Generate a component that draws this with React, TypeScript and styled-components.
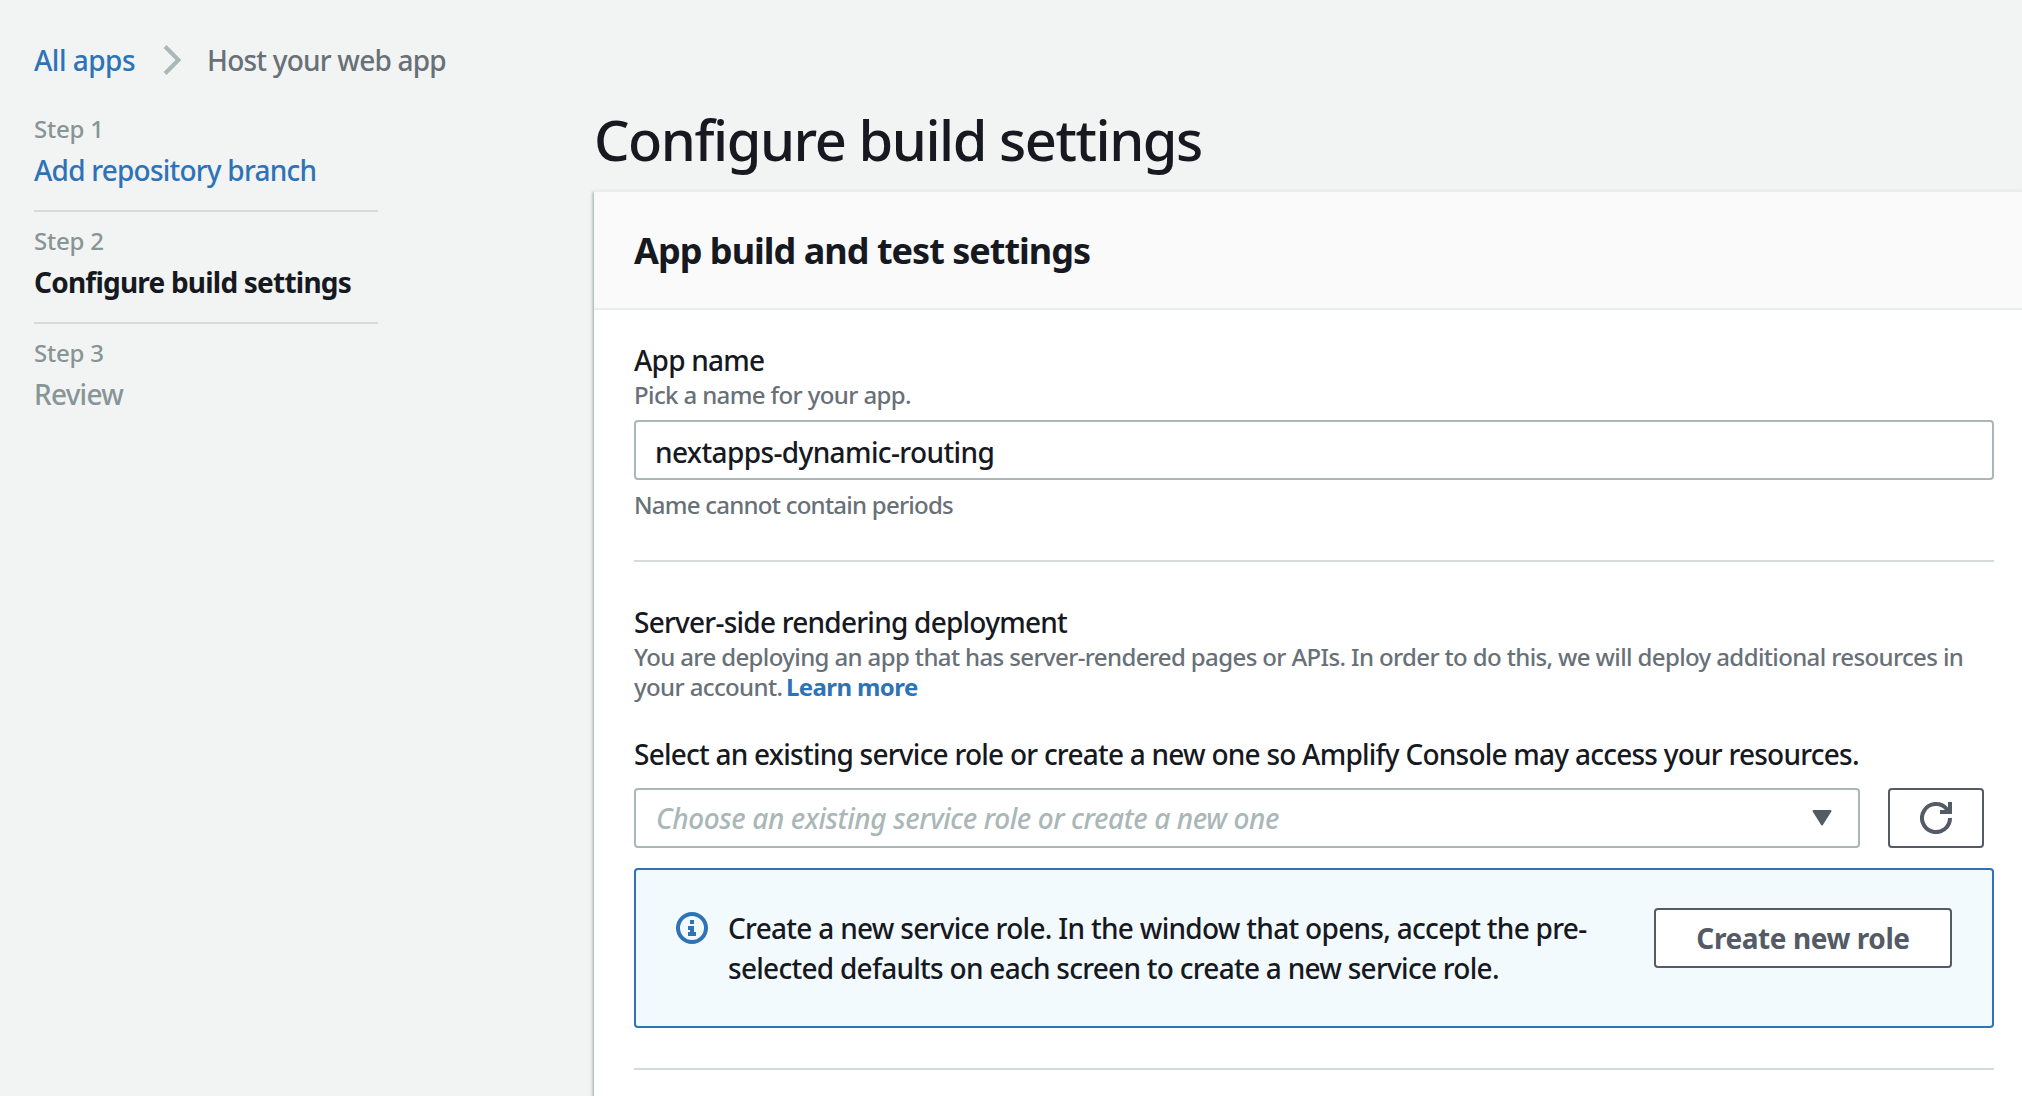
import React from "react";
import styled, { createGlobalStyle } from "styled-components";

const Global = createGlobalStyle`
  *, *::before, *::after { box-sizing: border-box; }
  body {
    margin: 0;
    background: #f2f4f3;
    color: #16191f;
    font-family: "Noto Sans", "Open Sans", sans-serif;
    font-weight: 500;
  }
`;

const Page = styled.div`
  height: 1096px;
  overflow: hidden;
  padding: 42px 0 0 34px;
  white-space: nowrap;
`;

const Breadcrumb = styled.nav`
  display: flex;
  align-items: center;
  height: 36px;
  font-size: 28px;
  line-height: 36px;
`;

const Crumb = styled.a<{ $current?: boolean }>`
  color: ${(p) => (p.$current ? "#687078" : "#2e73b8")};
  letter-spacing: ${(p) => (p.$current ? "-0.8px" : "-0.5px")};
`;

const Chevron = styled.svg`
  display: block;
  width: 20px;
  height: 32px;
  margin: 0 24px 0 28px;
`;

const Columns = styled.div`
  display: flex;
  gap: 216px;
`;

const Steps = styled.ol`
  list-style: none;
  width: 344px;
  margin: 0;
  padding: 22px 0 0;
`;

const Step = styled.li`
  height: 112px;
  padding: 11px 0 0;
  border-bottom: 2px solid #d5dbdb;

  &:last-child { border-bottom: 0; }
`;

const StepLabel = styled.div`
  font-size: 24px;
  line-height: 36px;
  letter-spacing: -0.2px;
  color: #879596;
`;

type StepState = "done" | "current" | "todo";
const stepColor = { done: "#2e73b8", current: "#16191f", todo: "#879596" };

const StepName = styled.div<{ $state: StepState }>`
  margin-top: 3px;
  font-size: 28px;
  line-height: 40px;
  letter-spacing: -0.78px;
  color: ${(p) => stepColor[p.$state]};
  font-weight: ${(p) => (p.$state === "current" ? 700 : 500)};
`;

const Main = styled.main`
  flex: 1;
  padding-top: 26px;
`;

const PageTitle = styled.h1`
  margin: 0 0 16px;
  font-size: 56px;
  font-weight: 500;
  line-height: 70px;
  letter-spacing: -1.46px;
`;

const Card = styled.section`
  height: 960px;
  background: #fff;
  border-top: 2px solid #eaeded;
  box-shadow: -1px 2px 3px 0 rgba(0, 28, 36, 0.38);
`;

const CardHeader = styled.header`
  padding: 37px 40px 35px;
  background: #fafafa;
  border-bottom: 2px solid #eaeded;
`;

const CardTitle = styled.h2`
  margin: 0;
  font-size: 36px;
  font-weight: 700;
  line-height: 44px;
  letter-spacing: -0.98px;
`;

const CardBody = styled.div`
  padding: 32px 28px 0 40px;
`;

const Label = styled.div`
  font-size: 28px;
  line-height: 36px;
  letter-spacing: -0.762px;
`;

const Hint = styled.div<{ $top: number; $spacing: number }>`
  margin-top: ${(p) => p.$top}px;
  font-size: 24px;
  line-height: 30px;
  letter-spacing: ${(p) => p.$spacing}px;
  color: #687078;
`;

const LearnMore = styled.a`
  margin-left: -2px;
  color: #2e73b8;
  font-weight: 700;
  letter-spacing: -0.61px;
`;

const TextInput = styled.input`
  display: block;
  width: 100%;
  height: 60px;
  margin-top: 10px;
  padding: 3px 19px 0;
  border: 2px solid #aab7b8;
  border-radius: 4px;
  background: #fff;
  color: #16191f;
  font: inherit;
  font-size: 28px;
  letter-spacing: -0.62px;
  outline: none;
`;

const Divider = styled.hr<{ $bottom: number }>`
  height: 2px;
  margin: 40px 0 ${(p) => p.$bottom}px;
  border: 0;
  background: #d5dbdb;
`;

const RoleLabel = styled(Label)`
  margin: 34px 0 16px;
`;

const RoleRow = styled.div`
  display: flex;
  gap: 28px;
  padding-right: 10px;
`;

const Select = styled.div`
  flex: 1;
  display: flex;
  align-items: center;
  justify-content: space-between;
  height: 60px;
  padding: 0 26px 0 20px;
  border: 2px solid #aab7b8;
  border-radius: 4px;
`;

const Placeholder = styled.span`
  font-size: 28px;
  font-style: italic;
  line-height: 38px;
  letter-spacing: -0.407px;
  color: #aab7b8;
`;

const Caret = styled.svg`
  display: block;
  width: 20px;
  height: 16px;
`;

const Button = styled.button`
  display: flex;
  align-items: center;
  justify-content: center;
  height: 60px;
  padding: 0;
  border: 2px solid #545b64;
  border-radius: 4px;
  background: #fff;
  color: #545b64;
  font: inherit;
  font-size: 28px;
  font-weight: 700;
  letter-spacing: -0.427px;
`;

const RefreshButton = styled(Button)`
  width: 96px;
`;

const CreateButton = styled(Button)`
  width: 298px;
`;

const Icon = styled.svg`
  display: block;
  width: 32px;
  height: 32px;
`;

const Alert = styled.div`
  display: flex;
  align-items: flex-start;
  height: 160px;
  margin-top: 20px;
  padding: 38px 40px;
  border: 2px solid #2e73b8;
  border-radius: 4px;
  background: #f2fafd;
`;

const InfoIcon = styled(Icon)`
  margin: 4px 20px 0 0;
`;

const AlertText = styled.div`
  flex: 1;
  font-size: 28px;
  line-height: 40px;
`;

const AlertLine = styled.div<{ $spacing: number }>`
  letter-spacing: ${(p) => p.$spacing}px;
`;

const steps: { name: string; state: StepState }[] = [
  { name: "Add repository branch", state: "done" },
  { name: "Configure build settings", state: "current" },
  { name: "Review", state: "todo" },
];

export default function App() {
  return (
    <Page>
      <Global />
      <Breadcrumb>
        <Crumb>All apps</Crumb>
        <Chevron viewBox="0 0 20 32" fill="none" stroke="#aab7b8" strokeWidth="4">
          <path d="M2 2.5 15.5 16 2 29.5" />
        </Chevron>
        <Crumb $current>Host your web app</Crumb>
      </Breadcrumb>
      <Columns>
        <Steps>
          {steps.map((s, i) => (
            <Step key={s.name}>
              <StepLabel>Step {i + 1}</StepLabel>
              <StepName $state={s.state}>{s.name}</StepName>
            </Step>
          ))}
        </Steps>
        <Main>
          <PageTitle>Configure build settings</PageTitle>
          <Card>
            <CardHeader>
              <CardTitle>App build and test settings</CardTitle>
            </CardHeader>
            <CardBody>
              <Label>App name</Label>
              <Hint $top={2} $spacing={-0.62}>Pick a name for your app.</Hint>
              <TextInput defaultValue="nextapps-dynamic-routing" />
              <Hint $top={10} $spacing={-0.76}>Name cannot contain periods</Hint>
              <Divider $bottom={42} />
              <Label>Server-side rendering deployment</Label>
              <Hint $top={2} $spacing={-0.625}>
                You are deploying an app that has server-rendered pages or APIs. In order to do this, we will deploy additional resources in
                <br />
                your account. <LearnMore>Learn more</LearnMore>
              </Hint>
              <RoleLabel>
                Select an existing service role or create a new one so Amplify Console may access your resources.
              </RoleLabel>
              <RoleRow>
                <Select>
                  <Placeholder>Choose an existing service role or create a new one</Placeholder>
                  <Caret viewBox="0 0 20 16">
                    <path d="M1.5 1h17L10 14.5Z" fill="#545b64" stroke="#545b64" strokeWidth="2" strokeLinejoin="round" />
                  </Caret>
                </Select>
                <RefreshButton aria-label="Refresh">
                  <Icon viewBox="0 0 32 32" fill="none" stroke="#545b64" strokeWidth="4">
                    <path d="M30 16A14 14 0 1 1 26.5 6.8L29 10" />
                    <path d="M30 0V10H20" />
                  </Icon>
                </RefreshButton>
              </RoleRow>
              <Alert>
                <InfoIcon viewBox="0 0 32 32" fill="#2e73b8">
                  <circle cx="16" cy="16" r="14" fill="none" stroke="#2e73b8" strokeWidth="4" />
                  <path d="M14 8h4v4h-4ZM12 14h6v6h2v4h-8v-4h2v-2h-2Z" />
                </InfoIcon>
                <AlertText>
                  <AlertLine $spacing={-0.705}>Create a new service role. In the window that opens, accept the pre-</AlertLine>
                  <AlertLine $spacing={-0.73}>selected defaults on each screen to create a new service role.</AlertLine>
                </AlertText>
                <CreateButton>Create new role</CreateButton>
              </Alert>
              <Divider $bottom={0} />
            </CardBody>
          </Card>
        </Main>
      </Columns>
    </Page>
  );
}
